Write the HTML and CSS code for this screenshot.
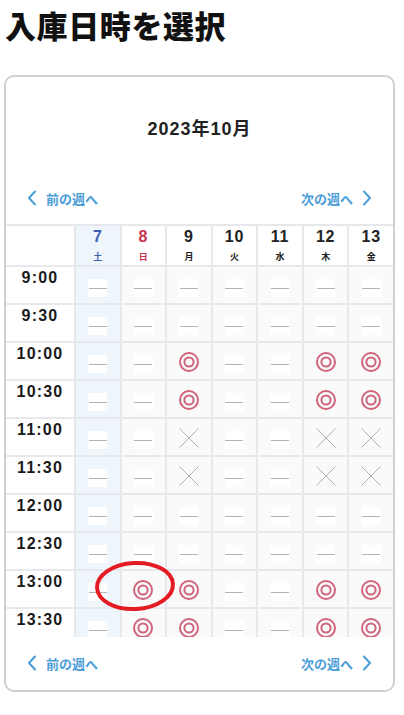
FILE: index.html
```html
<!DOCTYPE html>
<html lang="ja">
<head>
<meta charset="utf-8">
<title>入庫日時を選択</title>
<link rel="stylesheet" href="styles.css">
</head>
<body>
<h1 class="title">入庫日時を選択</h1>
<div class="card">
  <div class="month">2023年10月</div>
  <div class="week-nav">
    <a class="nav-link"><svg class="chev" viewBox="0 0 10 16"><path d="M8 1.5 L2 8 L8 14.5"/></svg>前の週へ</a>
    <a class="nav-link">次の週へ<svg class="chev" viewBox="0 0 10 16"><path d="M2 1.5 L8 8 L2 14.5"/></svg></a>
  </div>
  <div class="scroll">
    <div class="grid" id="grid">
      <div class="hcell"></div>
      <div class="hcell sat"><span class="dnum">7</span><span class="dow">土</span></div>
      <div class="hcell sun"><span class="dnum">8</span><span class="dow">日</span></div>
      <div class="hcell"><span class="dnum">9</span><span class="dow">月</span></div>
      <div class="hcell"><span class="dnum">10</span><span class="dow">火</span></div>
      <div class="hcell"><span class="dnum">11</span><span class="dow">水</span></div>
      <div class="hcell"><span class="dnum">12</span><span class="dow">木</span></div>
      <div class="hcell"><span class="dnum">13</span><span class="dow">金</span></div>
    </div>
  </div>
  <div class="week-nav bottom">
    <a class="nav-link"><svg class="chev" viewBox="0 0 10 16"><path d="M8 1.5 L2 8 L8 14.5"/></svg>前の週へ</a>
    <a class="nav-link">次の週へ<svg class="chev" viewBox="0 0 10 16"><path d="M2 1.5 L8 8 L2 14.5"/></svg></a>
  </div>
</div>
<svg class="mark" width="90" height="60" viewBox="0 0 90 60"><ellipse cx="45" cy="30" rx="38" ry="23" transform="rotate(-3 45 30)"/></svg>
<script src="app.js"></script>
</body>
</html>
```
FILE: app.js
```js
const rows = [
  ["9:00",  "-------"],
  ["9:30",  "-------"],
  ["10:00", "--o--oo"],
  ["10:30", "--o--oo"],
  ["11:00", "--x--xx"],
  ["11:30", "--x--xx"],
  ["12:00", "-------"],
  ["12:30", "-------"],
  ["13:00", "-oo--oo"],
  ["13:30", "-oo--oo"]
];
const grid = document.getElementById("grid");
const circle = '<svg class="ic" viewBox="0 0 22 22"><circle cx="11" cy="11" r="9"/><circle cx="11" cy="11" r="4.6"/></svg>';
const cross = '<svg class="ic cross" viewBox="0 0 22 22"><path d="M1.5 1.5 L20.5 20.5 M20.5 1.5 L1.5 20.5"/></svg>';
for (const [t, s] of rows) {
  const tc = document.createElement("div");
  tc.className = "tcell";
  tc.textContent = t;
  grid.appendChild(tc);
  [...s].forEach((ch, i) => {
    const c = document.createElement("div");
    c.className = "cell" + (i === 0 ? " sat" : "");
    if (ch === "o") c.innerHTML = circle;
    else if (ch === "x") c.innerHTML = cross;
    else c.innerHTML = '<span class="dash"></span>';
    grid.appendChild(c);
  });
}
```
FILE: styles.css
```css
* { box-sizing: border-box; }
body {
  margin: 0;
  background: #fff;
  font-family: "Liberation Sans", "Noto Sans CJK JP", sans-serif;
  color: #222;
  position: relative;
}
.title {
  margin: 0;
  padding: 7px 0 0 5px;
  height: 75px;
  font-size: 31px;
  line-height: 36px;
  letter-spacing: 0.6px;
  font-weight: 900;
  color: #111;
  font-family: "Noto Sans CJK JP", sans-serif;
}
.card {
  margin-left: 4px;
  width: 391px;
  height: 617px;
  border: 2px solid #d0d0d0;
  border-radius: 10px;
  padding-top: 40px;
}
.month {
  text-align: center;
  font-size: 18px;
  line-height: 24px;
  letter-spacing: 1px;
  font-weight: 700;
  color: #222;
}
.week-nav {
  display: flex;
  justify-content: space-between;
  align-items: center;
  padding: 0 21px 0 21px;
  margin-top: 47px;
  height: 20px;
}
.week-nav.bottom { margin-top: 16px; }
.nav-link {
  display: flex;
  align-items: center;
  gap: 9px;
  color: #4a9dd8;
  font-size: 13px;
  font-weight: 700;
  font-family: "Noto Sans CJK JP", sans-serif;
}
.chev { width: 10px; height: 16px; }
.chev path { fill: none; stroke: #4a9dd8; stroke-width: 2; stroke-linecap: round; stroke-linejoin: round; }
.scroll {
  margin-top: 16px;
  height: 413px;
  overflow: hidden;
}
.grid {
  display: grid;
  grid-template-columns: 68px repeat(7, 1fr);
  grid-template-rows: 39px;
  grid-auto-rows: 36px;
  gap: 2px;
  padding-top: 2px;
  background: #e6e8ec;
}
.hcell {
  background: #fff;
  display: flex;
  flex-direction: column;
  align-items: center;
  padding-top: 2px;
}
.hcell.sat { background: #eef6fc; color: #3f5fb0; }
.hcell.sun { color: #c8334f; }
.dnum { font-size: 16px; line-height: 18px; font-weight: 700; letter-spacing: 0.8px; }
.dow { font-size: 9px; line-height: 12px; margin-top: 5px; font-family: "Noto Sans CJK JP", sans-serif; font-weight: 700; }
.tcell {
  background: #fff;
  text-align: center;
  font-size: 16px;
  line-height: 18px;
  font-weight: 700;
  padding-top: 2px;
  color: #1a1a1a;
  letter-spacing: 1.2px;
}
.cell {
  background: #fafafa;
  display: flex;
  align-items: center;
  justify-content: center;
}
.cell.sat { background: #eef6fc; }
.dash {
  display: block;
  width: 19px;
  height: 18px;
  margin-top: 6px;
  background: linear-gradient(#b3b3b3, #b3b3b3) center / 18px 1px no-repeat #fff;
}
.ic { width: 22px; height: 22px; margin-top: 2px; }
.ic circle { fill: none; stroke: #cf647b; stroke-width: 2; }
.ic.cross path { fill: none; stroke: #b0b0b0; stroke-width: 1; }
.mark {
  position: absolute;
  left: 90px;
  top: 556px;
}
.mark ellipse { fill: none; stroke: #e41b23; stroke-width: 4; }
```
